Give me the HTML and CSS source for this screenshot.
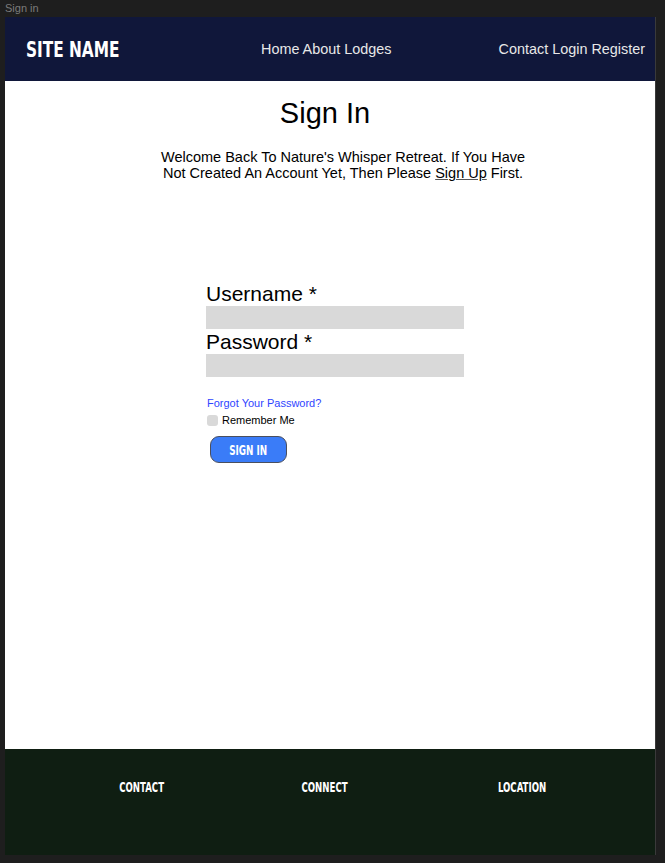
FILE: index.html
```html
<!DOCTYPE html>
<html lang="en">
<head>
<meta charset="utf-8">
<title>Sign in</title>
<link rel="stylesheet" href="styles.css">
</head>
<body>
<div class="frame-label">Sign in</div>
<div class="frame">
  <header class="header">
    <div class="brand"><span class="cond brand-text">SITE NAME</span></div>
    <nav class="nav nav-main">Home About Lodges</nav>
    <nav class="nav nav-user">Contact Login Register</nav>
  </header>
  <main class="main">
    <h1 class="title">Sign In</h1>
    <p class="intro">Welcome Back To Nature's Whisper Retreat. If You Have Not Created An Account Yet, Then Please <a class="signup" href="#">Sign Up</a> First.</p>
    <form class="form">
      <label class="field-label" for="user">Username *</label>
      <input class="field" id="user" type="text">
      <label class="field-label" for="pass">Password *</label>
      <input class="field" id="pass" type="password">
      <a class="forgot" href="#">Forgot Your Password?</a>
      <label class="remember"><span class="check"></span>Remember Me</label>
      <button class="btn" type="button"><span class="cond btn-text">SIGN IN</span></button>
    </form>
  </main>
  <footer class="footer">
    <div class="foot-col"><span class="cond foot-text">CONTACT</span></div>
    <div class="foot-col"><span class="cond foot-text">CONNECT</span></div>
    <div class="foot-col"><span class="cond foot-text">LOCATION</span></div>
  </footer>
</div>
</body>
</html>
```

FILE: styles.css
```css
* { box-sizing: border-box; }

html, body {
  margin: 0;
  padding: 0;
  background: #1e1e1e;
  font-family: "Liberation Sans", Arial, sans-serif;
}

.frame-label {
  height: 17px;
  padding-left: 5px;
  padding-top: 2px;
  font-size: 11px;
  line-height: 13px;
  color: #7b7b7b;
}

.frame {
  margin-left: 5px;
  width: 651px;
  height: 838px;
  border-right: 1px solid #3a3a3a;
  display: flex;
  flex-direction: column;
  background: #ffffff;
}

.cond {
  display: inline-block;
  font-family: "DejaVu Sans Condensed", "DejaVu Sans", sans-serif;
  font-stretch: condensed;
  font-weight: bold;
  color: #ffffff;
}

.header {
  height: 64px;
  flex: none;
  background: #10173a;
  display: flex;
  align-items: center;
  padding-left: 21px;
  padding-right: 10px;
}

.brand {
  width: 235px;
}

.brand-text {
  font-size: 22px;
  line-height: 26px;
  transform: scaleX(0.775);
  transform-origin: left center;
  margin-top: 2px;
}

.nav {
  font-size: 14.4px;
  color: #e8e8e8;
  line-height: 18px;
}

.nav-user {
  margin-left: auto;
}

.main {
  flex: 1;
  padding-top: 16px;
}

.title {
  margin: 0;
  padding-right: 10px;
  text-align: center;
  font-size: 29px;
  line-height: 33px;
  font-weight: normal;
  color: #000000;
}

.intro {
  margin: 19px 0 0 152px;
  width: 372px;
  text-align: center;
  font-size: 14.5px;
  line-height: 16px;
  color: #000000;
}

.signup {
  color: #000000;
  text-decoration: underline;
  text-decoration-color: #555555;
}

.form {
  margin: 100px 0 0 201px;
  width: 258px;
  display: flex;
  flex-direction: column;
  align-items: flex-start;
}

.field-label {
  font-size: 21px;
  line-height: 25px;
  color: #000000;
}

.field {
  display: block;
  width: 258px;
  height: 23px;
  margin: 0;
  border: 0;
  background: #d9d9d9;
}

.forgot {
  margin-top: 20px;
  margin-left: 1px;
  font-size: 11px;
  line-height: 13px;
  color: #2f45ff;
  text-decoration: none;
}

.remember {
  margin-top: 4px;
  margin-left: 1px;
  display: flex;
  align-items: center;
  gap: 4px;
  font-size: 11px;
  line-height: 13px;
  color: #000000;
}

.check {
  width: 11px;
  height: 11px;
  border-radius: 3px;
  background: #d9d9d9;
}

.btn {
  margin-top: 9px;
  margin-left: 4px;
  width: 77px;
  height: 27px;
  padding: 0;
  border: 1px solid #4a4f5e;
  border-radius: 9px;
  background: #3a7cf8;
  display: flex;
  align-items: center;
  justify-content: center;
}

.btn-text {
  font-size: 14px;
  line-height: 16px;
  transform: scaleX(0.7);
}

.footer {
  height: 106px;
  flex: none;
  background: #0f1e12;
  display: grid;
  grid-template-columns: 190px 176px 218px;
  padding-left: 42px;
  padding-top: 29px;
  align-content: start;
}

.foot-col {
  text-align: center;
}

.foot-text {
  font-size: 13.5px;
  line-height: 16px;
  transform: scaleX(0.71);
}
```
